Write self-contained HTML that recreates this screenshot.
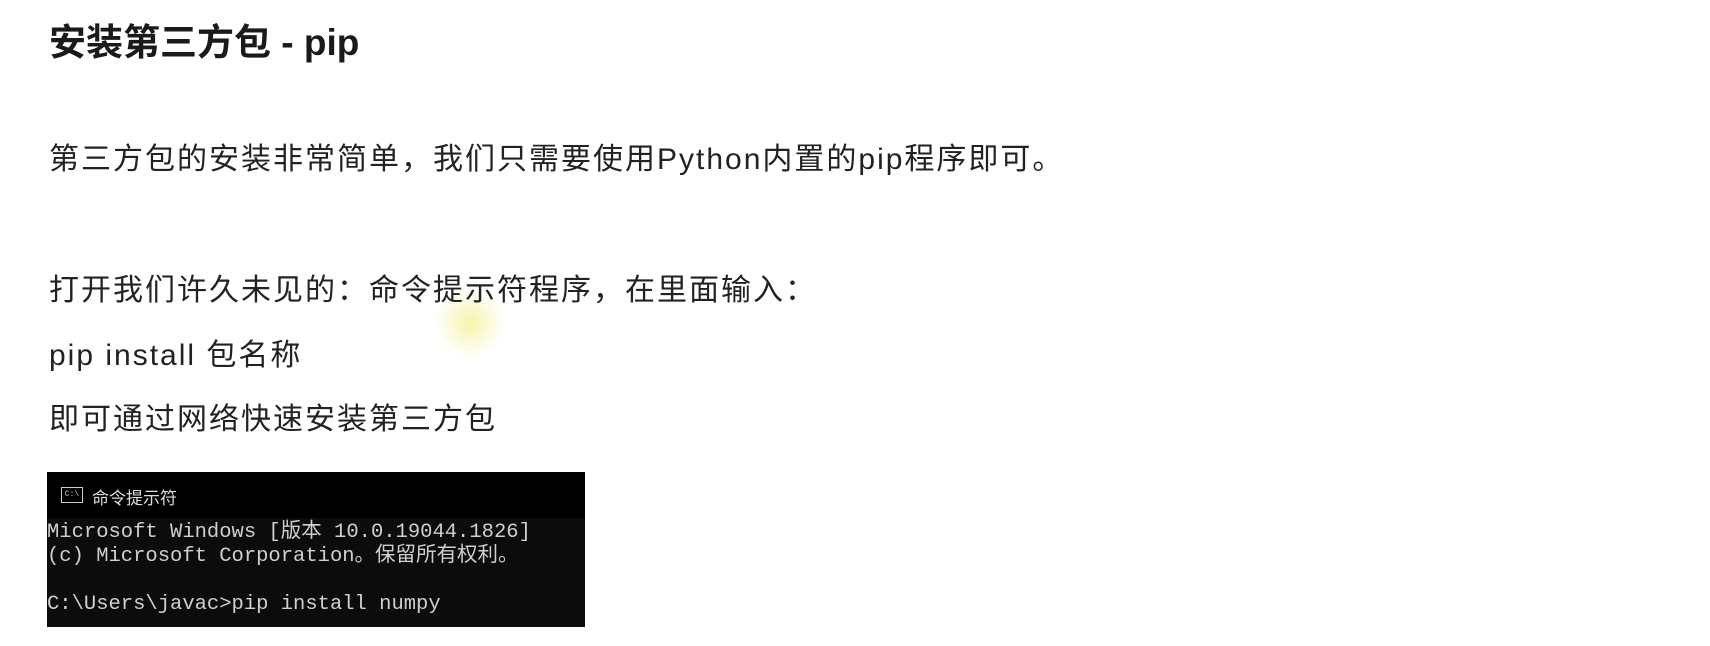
<!DOCTYPE html>
<html><head><meta charset="utf-8"><style>
html,body{margin:0;padding:0;background:#fff;width:1710px;height:646px;overflow:hidden;position:relative}
.t{position:absolute;left:49px;font-family:"Liberation Sans","Noto Sans CJK SC",sans-serif;color:#222;white-space:nowrap;line-height:1}
h1{position:absolute;left:49px;top:24px;margin:0;font:bold 37px "Liberation Sans","Noto Sans CJK SC",sans-serif;color:#1a1a1a;line-height:1}
.p{font-size:30px;letter-spacing:2px}
.term{position:absolute;left:47px;top:472px;width:538px;height:155px;background:#0c0c0c}
.bar{height:46px;background:#000;position:relative}
.bar span{position:absolute;left:45px;top:12px;color:#ddd;font:17px "Noto Sans CJK SC",sans-serif}
.ico{position:absolute;left:14px;top:15px;width:20px;height:14px;border:1px solid #ccc;font:8px "Liberation Mono",monospace;color:#ccc;line-height:14px;text-align:center}
.m{position:absolute;left:0;font:20.5px "Liberation Mono","Noto Sans CJK SC",monospace;color:#cfcfcf;white-space:pre;line-height:1}
.hl{position:absolute;left:435px;top:288px;width:70px;height:70px;border-radius:50%;background:radial-gradient(circle,rgba(245,240,150,.8),rgba(255,255,200,0) 70%)}
</style></head><body>
<h1>安装第三方包 - pip</h1>
<div class="t p" style="top:145px">第三方包的安装非常简单，我们只需要使用Python内置的pip程序即可。</div>
<div class="hl"></div>
<div class="t p" style="top:276px">打开我们许久未见的：命令提示符程序，在里面输入：</div>
<div class="t p" style="top:341px">pip install 包名称</div>
<div class="t p" style="top:405px">即可通过网络快速安装第三方包</div>
<div class="term">
 <div class="bar"><div class="ico">C:\</div><span>命令提示符</span></div>
 <div class="m" style="top:51px">Microsoft Windows [版本 10.0.19044.1826]</div>
 <div class="m" style="top:75px">(c) Microsoft Corporation。保留所有权利。</div>
 <div class="m" style="top:123px">C:\Users\javac&gt;pip install numpy</div>
</div>
</body></html>
